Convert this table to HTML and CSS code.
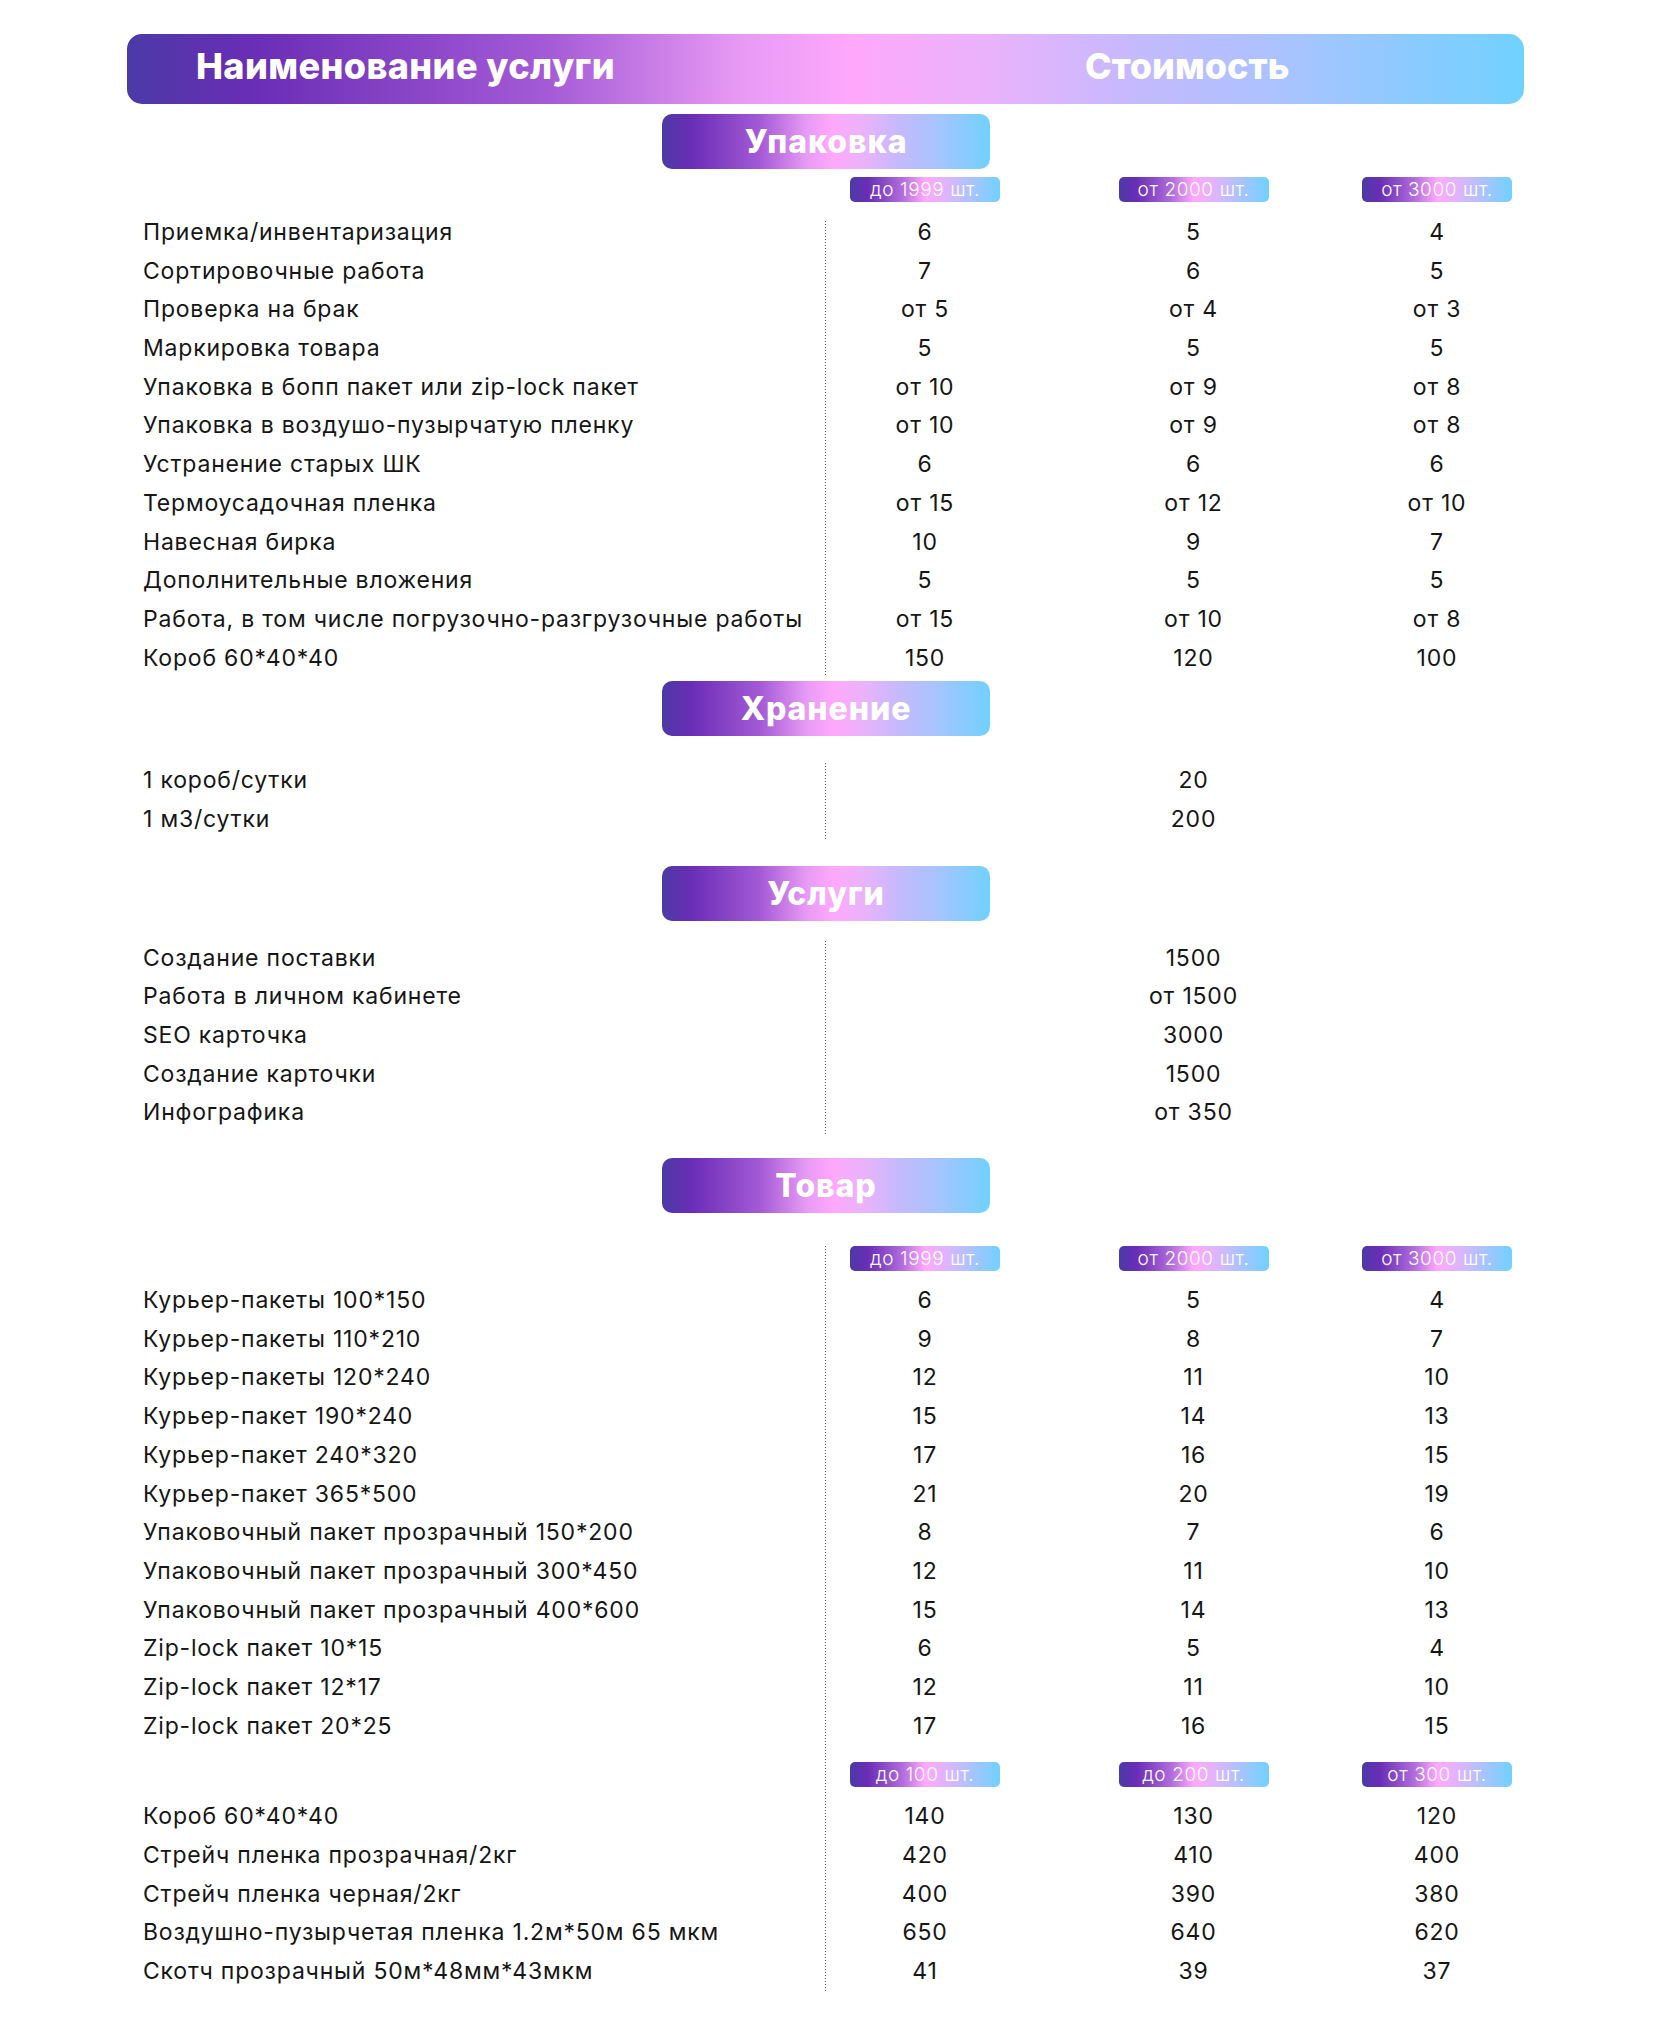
FILE: index.html
```html
<!DOCTYPE html>
<html lang="ru">
<head>
<meta charset="utf-8">
<title>Прайс</title>
<link rel="stylesheet" href="styles.css">
</head>
<body>
<div class="page">
  <div class="head">
    <div class="head-name">Наименование услуги</div>
    <div class="head-price">Стоимость</div>
  </div>

  <!-- Упаковка -->
  <div class="badge badge-first">Упаковка</div>
  <div class="table table-pack">
    <div class="row pills"><span></span><span class="pill">до 1999 шт.</span><span class="pill">от 2000 шт.</span><span class="pill">от 3000 шт.</span></div>
    <div class="rows lined">
      <div class="row"><span class="label">Приемка/инвентаризация</span><span>6</span><span>5</span><span>4</span></div>
      <div class="row"><span class="label">Сортировочные работа</span><span>7</span><span>6</span><span>5</span></div>
      <div class="row"><span class="label">Проверка на брак</span><span>от 5</span><span>от 4</span><span>от 3</span></div>
      <div class="row"><span class="label">Маркировка товара</span><span>5</span><span>5</span><span>5</span></div>
      <div class="row"><span class="label">Упаковка в бопп пакет или zip-lock пакет</span><span>от 10</span><span>от 9</span><span>от 8</span></div>
      <div class="row"><span class="label">Упаковка в воздушо-пузырчатую пленку</span><span>от 10</span><span>от 9</span><span>от 8</span></div>
      <div class="row"><span class="label">Устранение старых ШК</span><span>6</span><span>6</span><span>6</span></div>
      <div class="row"><span class="label">Термоусадочная пленка</span><span>от 15</span><span>от 12</span><span>от 10</span></div>
      <div class="row"><span class="label">Навесная бирка</span><span>10</span><span>9</span><span>7</span></div>
      <div class="row"><span class="label">Дополнительные вложения</span><span>5</span><span>5</span><span>5</span></div>
      <div class="row"><span class="label">Работа, в том числе погрузочно-разгрузочные работы</span><span>от 15</span><span>от 10</span><span>от 8</span></div>
      <div class="row"><span class="label">Короб 60*40*40</span><span>150</span><span>120</span><span>100</span></div>
    </div>
  </div>

  <!-- Хранение -->
  <div class="badge badge-store">Хранение</div>
  <div class="table table-store">
    <div class="rows lined">
      <div class="row"><span class="label">1 короб/сутки</span><span></span><span>20</span><span></span></div>
      <div class="row"><span class="label">1 м3/сутки</span><span></span><span>200</span><span></span></div>
    </div>
  </div>

  <!-- Услуги -->
  <div class="badge badge-serv">Услуги</div>
  <div class="table table-serv">
    <div class="rows lined">
      <div class="row"><span class="label">Создание поставки</span><span></span><span>1500</span><span></span></div>
      <div class="row"><span class="label">Работа в личном кабинете</span><span></span><span>от 1500</span><span></span></div>
      <div class="row"><span class="label">SEO карточка</span><span></span><span>3000</span><span></span></div>
      <div class="row"><span class="label">Создание карточки</span><span></span><span>1500</span><span></span></div>
      <div class="row"><span class="label">Инфографика</span><span></span><span>от 350</span><span></span></div>
    </div>
  </div>

  <!-- Товар -->
  <div class="badge badge-goods">Товар</div>
  <div class="table table-goods lined">
    <div class="row pills"><span></span><span class="pill">до 1999 шт.</span><span class="pill">от 2000 шт.</span><span class="pill">от 3000 шт.</span></div>
    <div class="rows">
      <div class="row"><span class="label">Курьер-пакеты 100*150</span><span>6</span><span>5</span><span>4</span></div>
      <div class="row"><span class="label">Курьер-пакеты 110*210</span><span>9</span><span>8</span><span>7</span></div>
      <div class="row"><span class="label">Курьер-пакеты 120*240</span><span>12</span><span>11</span><span>10</span></div>
      <div class="row"><span class="label">Курьер-пакет 190*240</span><span>15</span><span>14</span><span>13</span></div>
      <div class="row"><span class="label">Курьер-пакет 240*320</span><span>17</span><span>16</span><span>15</span></div>
      <div class="row"><span class="label">Курьер-пакет 365*500</span><span>21</span><span>20</span><span>19</span></div>
      <div class="row"><span class="label">Упаковочный пакет прозрачный 150*200</span><span>8</span><span>7</span><span>6</span></div>
      <div class="row"><span class="label">Упаковочный пакет прозрачный 300*450</span><span>12</span><span>11</span><span>10</span></div>
      <div class="row"><span class="label">Упаковочный пакет прозрачный 400*600</span><span>15</span><span>14</span><span>13</span></div>
      <div class="row"><span class="label">Zip-lock пакет 10*15</span><span>6</span><span>5</span><span>4</span></div>
      <div class="row"><span class="label">Zip-lock пакет 12*17</span><span>12</span><span>11</span><span>10</span></div>
      <div class="row"><span class="label">Zip-lock пакет 20*25</span><span>17</span><span>16</span><span>15</span></div>
    </div>
    <div class="row pills pills-second"><span></span><span class="pill">до 100 шт.</span><span class="pill">до 200 шт.</span><span class="pill">от 300 шт.</span></div>
    <div class="rows">
      <div class="row"><span class="label">Короб 60*40*40</span><span>140</span><span>130</span><span>120</span></div>
      <div class="row"><span class="label">Стрейч пленка прозрачная/2кг</span><span>420</span><span>410</span><span>400</span></div>
      <div class="row"><span class="label">Стрейч пленка черная/2кг</span><span>400</span><span>390</span><span>380</span></div>
      <div class="row"><span class="label">Воздушно-пузырчетая пленка 1.2м*50м 65 мкм</span><span>650</span><span>640</span><span>620</span></div>
      <div class="row"><span class="label">Скотч прозрачный 50м*48мм*43мкм</span><span>41</span><span>39</span><span>37</span></div>
    </div>
  </div>
</div>
</body>
</html>
```

FILE: styles.css
```css
* { box-sizing: border-box; }

body {
  margin: 0;
  background: #ffffff;
  font-family: "Inter", "Noto Sans", sans-serif;
  color: #161616;
}

.page {
  width: 1654px;
  padding-top: 34px;
}

.head {
  margin-left: 127px;
  width: 1397px;
  height: 70px;
  padding-bottom: 6px;
  border-radius: 15px;
  display: grid;
  grid-template-columns: 698px 1fr;
  align-items: center;
  color: #ffffff;
  font-weight: 800;
  font-size: 36px;
  letter-spacing: 0.4px;
  background: linear-gradient(90deg, #4b3aa6 0%, #6a2db6 9%, #a45ad6 30%, #e79af4 44%, #ffa8fc 52%, #e8b3fb 62%, #c6b9fe 72%, #a6c4ff 84%, #70d1ff 100%);
}

.head-name { padding-left: 69px; }
.head-price { padding-left: 260px; letter-spacing: 0; }

.badge {
  width: 328px;
  height: 55px;
  margin-left: 662px;
  border-radius: 10px;
  display: flex;
  align-items: center;
  justify-content: center;
  color: #ffffff;
  font-weight: 800;
  font-size: 32px;
  letter-spacing: 0.9px;
  background: linear-gradient(90deg, #4b3aa6 0%, #6a2db6 9%, #a45ad6 30%, #e79af4 44%, #ffa8fc 52%, #e8b3fb 62%, #c6b9fe 72%, #a6c4ff 84%, #70d1ff 100%);
}

.badge-first { margin-top: 10px; }
.badge-store { margin-top: 4px; }
.badge-serv { margin-top: 27px; }
.badge-goods { margin-top: 26px; }

.table {
  margin-left: 143px;
  width: 1369px;
}

.lined { position: relative; }
.lined::before {
  content: "";
  position: absolute;
  left: 682px;
  top: 8px;
  bottom: 0;
  width: 1px;
  background-image: linear-gradient(180deg, #5c5c5c 50%, transparent 50%);
  background-size: 1px 3px;
}
.table-store .lined::before,
.table-serv .lined::before { top: 2px; bottom: -2px; }
.table-goods.lined::before { top: 0; bottom: 0; }

.row {
  display: grid;
  grid-template-columns: 682px 200px 337px 150px;
  height: 38.7px;
  align-items: center;
  font-size: 23px;
  letter-spacing: 0.8px;
  line-height: 38.7px;
}

.row > span { text-align: center; white-space: nowrap; }
.row > span.label { text-align: left; }

.pills { height: 25px; line-height: 25px; }

.pill {
  width: 150px;
  height: 25px;
  border-radius: 5px;
  color: #ffffff;
  font-size: 19px;
  font-weight: 300;
  letter-spacing: 0.6px;
  justify-self: center;
  background: linear-gradient(90deg, #4b3aa6 0%, #6a2db6 12%, #b06ddc 35%, #ffa8fc 50%, #dcb5fc 65%, #a6c4ff 82%, #70d1ff 100%);
}

.table-pack .pills { margin-top: 8px; margin-bottom: 11px; }
.table-store { margin-top: 25px; }
.table-serv { margin-top: 18px; }
.table-goods { margin-top: 33px; }
.table-goods .pills { margin-bottom: 10px; }
.table-goods .pills-second { margin-top: 17px; }
```
